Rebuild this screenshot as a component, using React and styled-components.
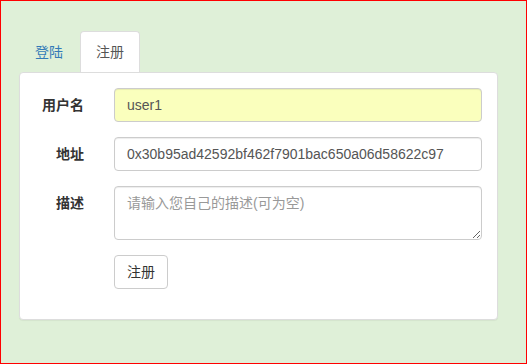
import { useState } from 'react';
import styled, { createGlobalStyle } from 'styled-components';

const GlobalStyle = createGlobalStyle`
  html, body {
    margin: 0;
    padding: 0;
    height: 100%;
  }
  body {
    font-family: "Liberation Sans", "Noto Sans CJK SC", sans-serif;
    font-size: 14px;
    line-height: 20px;
    color: #333;
  }
  * {
    box-sizing: border-box;
  }
`;

const Page = styled.div`
  min-height: 100vh;
  background: #dff0d8;
  border: 1px solid #ff0000;
  padding: 30px 28px 0 18px;
`;

const Tabs = styled.ul`
  display: flex;
  list-style: none;
  margin: 0;
  padding: 0;
`;

const Tab = styled.li`
  margin-right: 1px;
`;

const TabLink = styled.a`
  display: block;
  padding: 10px 15px;
  line-height: 20px;
  border: 1px solid transparent;
  border-bottom: 0;
  border-radius: 4px 4px 0 0;
  color: ${(p) => (p.$active ? '#555' : '#337ab7')};
  background: ${(p) => (p.$active ? '#fff' : 'transparent')};
  border-color: ${(p) => (p.$active ? '#ddd' : 'transparent')};
  text-decoration: none;
  cursor: pointer;
`;

const Panel = styled.div`
  background: #fff;
  border: 1px solid #ddd;
  border-radius: 4px;
  box-shadow: 0 1px 1px rgba(0, 0, 0, 0.05);
  padding: 15px;
`;

const FormRow = styled.div`
  display: grid;
  grid-template-columns: 49px 1fr;
  column-gap: 30px;
  margin-bottom: 15px;
`;

const Label = styled.label`
  text-align: right;
  font-weight: bold;
  padding-top: 7px;
  white-space: nowrap;
`;

const Input = styled.input`
  display: block;
  width: 100%;
  height: 34px;
  padding: 6px 12px;
  font: inherit;
  color: #555;
  background: ${(p) => (p.$filled ? '#faffbd' : '#fff')};
  border: 1px solid #ccc;
  border-radius: 4px;
  box-shadow: inset 0 1px 1px rgba(0, 0, 0, 0.075);
  outline: none;
`;

const TextArea = styled.textarea`
  display: block;
  width: 100%;
  height: 54px;
  padding: 6px 12px;
  font: inherit;
  color: #555;
  border: 1px solid #ccc;
  border-radius: 4px;
  box-shadow: inset 0 1px 1px rgba(0, 0, 0, 0.075);
  outline: none;
  &::placeholder {
    color: #999;
  }
`;

const Button = styled.button`
  justify-self: start;
  height: 34px;
  padding: 6px 12px;
  font: inherit;
  color: #333;
  background: #fff;
  border: 1px solid #ccc;
  border-radius: 4px;
  cursor: pointer;
`;

export default function App() {
  let [tab, setTab] = useState(1);

  return (
    <>
      <GlobalStyle />
      <Page>
        <Tabs>
          <Tab>
            <TabLink $active={tab === 0} onClick={() => setTab(0)}>登陆</TabLink>
          </Tab>
          <Tab>
            <TabLink $active={tab === 1} onClick={() => setTab(1)}>注册</TabLink>
          </Tab>
        </Tabs>
        <Panel>
          <FormRow>
            <Label>用户名</Label>
            <Input $filled defaultValue="user1" />
          </FormRow>
          <FormRow>
            <Label>地址</Label>
            <Input defaultValue="0x30b95ad42592bf462f7901bac650a06d58622c97" />
          </FormRow>
          <FormRow>
            <Label>描述</Label>
            <TextArea placeholder="请输入您自己的描述(可为空)" />
          </FormRow>
          <FormRow>
            <span />
            <Button>注册</Button>
          </FormRow>
        </Panel>
      </Page>
    </>
  );
}
